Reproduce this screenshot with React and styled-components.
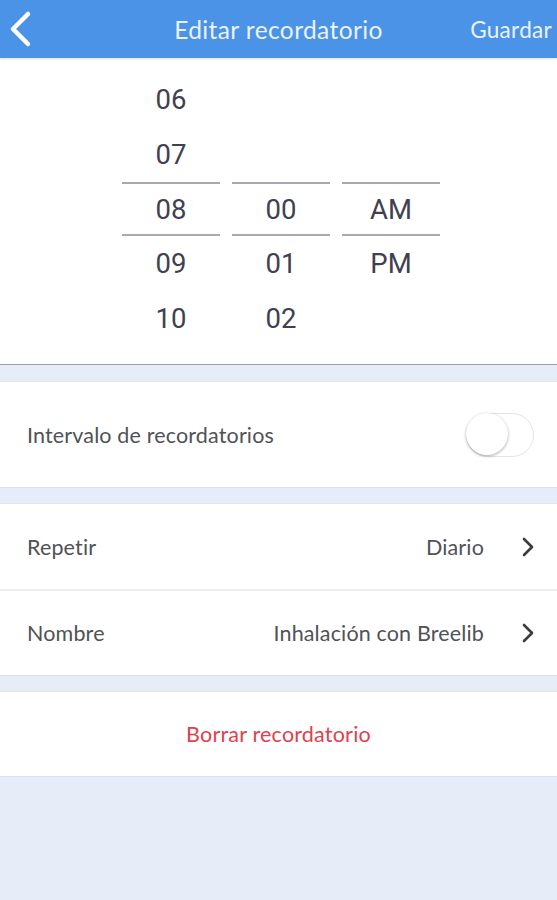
import React from "react";
import styled, { createGlobalStyle } from "styled-components";

const Global = createGlobalStyle`
  html, body { margin: 0; padding: 0; background: #e6edf8; }
  body { font-family: Lato, "Open Sans", sans-serif; }
`;

const Page = styled.div`
  width: 557px;
  min-height: 900px;
  background: #e6edf8;
  display: flex;
  flex-direction: column;
`;

const Header = styled.header`
  height: 58px;
  background: #4b93e6;
  display: grid;
  grid-template-columns: 80px 1fr 100px;
  align-items: center;
  box-shadow: 0 1px 2px rgba(0,0,0,0.12);
  position: relative;
  z-index: 1;
`;

const BackBtn = styled.div`
  display: flex;
  align-items: center;
  padding-left: 8px;
  height: 100%;
`;

const Title = styled.div`
  color: #eaf2fc;
  font-size: 24.5px;
  letter-spacing: 0.4px;
  text-align: center;
  padding-left: 20px;
  white-space: nowrap;
`;

const Save = styled.div`
  color: #eaf2fc;
  font-size: 22.5px;
  letter-spacing: 0.3px;
  text-align: right;
  padding-right: 5px;
  white-space: nowrap;
`;

const Picker = styled.section`
  background: #fff;
  height: 307px;
  border-bottom: 1px solid #9aa0ab;
  display: flex;
  justify-content: flex-start;
  padding-left: 122px;
  gap: 12px;
  box-sizing: border-box;
  padding-top: 14px;
`;

const Column = styled.div`
  width: 98px;
  display: flex;
  flex-direction: column;
`;

const Cell = styled.div`
  display: flex;
  align-items: center;
  justify-content: center;
  font-family: Roboto, "Noto Sans", sans-serif;
  font-size: 27.5px;
  color: #3f4150;
  box-sizing: border-box;
  border-top: ${(p) => (p.$selected ? "2px solid #a6a9b0" : "0")};
  border-bottom: ${(p) => (p.$selected ? "2px solid #a6a9b0" : "0")};
  height: ${(p) => (p.$selected ? "54px" : "55px")};
`;

const Gap = styled.div`
  height: ${(p) => p.$h}px;
  background: #e6edf8;
`;

const Group = styled.section`
  background: #fff;
  display: flex;
  flex-direction: column;
  border-top: 1px solid #e2e6ec;
  border-bottom: 1px solid #dde2ea;
`;

const Row = styled.div`
  height: ${(p) => p.$h}px;
  display: flex;
  align-items: center;
  padding: 0 22px 0 27px;
  border-top: ${(p) => (p.$divider ? "2px solid #eceef1" : "0")};
  box-sizing: border-box;
`;

const Label = styled.div`
  flex: 1;
  font-size: 21.5px;
  letter-spacing: 0.15px;
  color: #505256;
`;

const Value = styled.div`
  font-size: 21.5px;
  letter-spacing: 0.15px;
  color: #505256;
  margin-right: 37px;
`;

const Toggle = styled.div`
  width: 68px;
  height: 44px;
  border-radius: 22px;
  border: 1.5px solid #e4e4e4;
  box-sizing: border-box;
  position: relative;
  margin-right: 1px;
`;

const Thumb = styled.div`
  position: absolute;
  left: -1px;
  top: -1px;
  width: 42px;
  height: 42px;
  border-radius: 50%;
  background: #fff;
  box-shadow: 0 1px 3px rgba(0,0,0,0.35);
`;

const Delete = styled.div`
  height: 84px;
  display: flex;
  align-items: center;
  justify-content: center;
  font-size: 21.5px;
  letter-spacing: 0.2px;
  color: #e0414c;
`;

const Chevron = () => (
  <svg width="14" height="22" viewBox="0 0 14 22">
    <path d="M3 3 L11 11 L3 19" fill="none" stroke="#3a3c40" strokeWidth="2.6" strokeLinecap="round" strokeLinejoin="round" />
  </svg>
);

const Back = () => (
  <svg width="26" height="38" viewBox="0 0 26 38">
    <path d="M20 4 L5 19 L20 34" fill="none" stroke="#fff" strokeWidth="4.5" strokeLinecap="round" strokeLinejoin="round" />
  </svg>
);

const hours = ["06", "07", "08", "09", "10"];
const minutes = ["", "", "00", "01", "02"];
const ampm = ["", "", "AM", "PM", ""];

export default function App() {
  return (
    <Page>
      <Global />
      <Header>
        <BackBtn><Back /></BackBtn>
        <Title>Editar recordatorio</Title>
        <Save>Guardar</Save>
      </Header>
      <Picker>
        {[hours, minutes, ampm].map((col, ci) => (
          <Column key={ci}>
            {col.map((v, i) => (
              <Cell key={i} $selected={i === 2}>{v}</Cell>
            ))}
          </Column>
        ))}
      </Picker>
      <Gap $h={16} />
      <Group>
        <Row $h={105}>
          <Label>Intervalo de recordatorios</Label>
          <Toggle><Thumb /></Toggle>
        </Row>
      </Group>
      <Gap $h={15} />
      <Group>
        <Row $h={85}>
          <Label>Repetir</Label>
          <Value>Diario</Value>
          <Chevron />
        </Row>
        <Row $h={86} $divider>
          <Label>Nombre</Label>
          <Value>Inhalación con Breelib</Value>
          <Chevron />
        </Row>
      </Group>
      <Gap $h={15} />
      <Group>
        <Delete>Borrar recordatorio</Delete>
      </Group>
    </Page>
  );
}
